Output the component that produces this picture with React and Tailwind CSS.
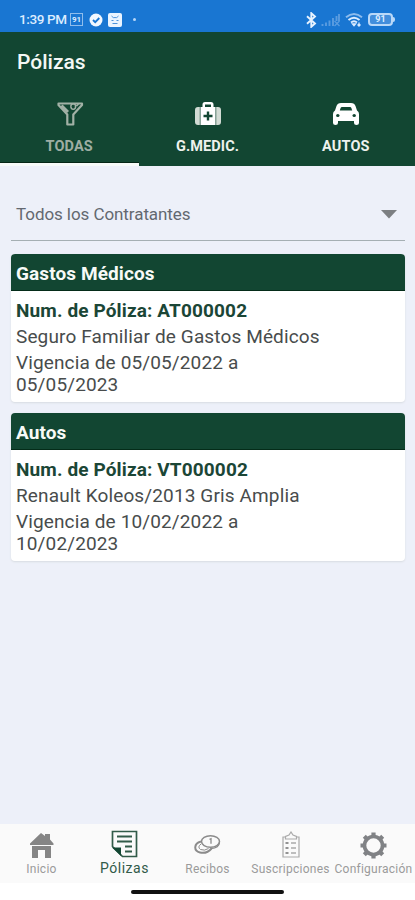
import React from "react";

function StatusBar() {
  return (
    <div className="flex h-8 items-start justify-between bg-[#1976d2] pl-[19px] pr-[20px] pt-[11px] text-[#dcecff]">
      <div className="flex h-[17px] items-center">
        <span className="w-[48px] whitespace-nowrap text-[13.5px] font-medium leading-[17px] tracking-[-0.4px]">1:39 PM</span>
        <span className="ml-[3px] flex h-[13px] w-[13px] items-center justify-center border border-[#8fbdec] text-[8px] font-bold leading-none">91</span>
        <svg className="ml-[6px]" width="14" height="14" viewBox="0 0 14 14">
          <circle cx="7" cy="7" r="6.5" fill="#f2f8ff" />
          <path d="M4 7l2.2 2.2L10.3 5" fill="none" stroke="#1976d2" strokeWidth="1.8" />
        </svg>
        <svg className="ml-[5px]" width="14" height="14" viewBox="0 0 14 14">
          <rect width="14" height="14" rx="2" fill="#eaf4ff" />
          <path d="M3.5 3l1.8 1.6h3.4L10.500 3M3.500 7.500h2M8.500 7.500h2M4.500 10.500h5" fill="none" stroke="#4b92da" strokeWidth="1" />
        </svg>
        <span className="ml-[11px] h-[3px] w-[3px] rounded-full bg-[#b7d7f8]" />
      </div>
      <div className="flex h-[17px] items-center">
        <svg width="11" height="16" viewBox="0 0 11 16" fill="none" stroke="#e8f3ff" strokeWidth="1.900">
          <path d="M1 4.300l8 7.200-3.700 3.300V1.200L9 4.500l-8 7.200" />
        </svg>
        <svg className="ml-[4px]" width="20" height="14" viewBox="0 0 20 14" stroke="#5a9ce0" strokeWidth="1.900">
          <path d="M1.500 13v-2M5 13V9.500M8.500 13V7.500M12 13V5M18 8V1M15.500 8V3" />
          <path d="M13.500 8l5 5M18.500 8l-5 5" strokeWidth="1.300" />
        </svg>
        <svg className="ml-[4px]" width="19" height="15" viewBox="0 0 19 15" fill="none" stroke="#dcecff" strokeWidth="1.900">
          <path d="M1 5.300Q9-1.500 17 5.300" stroke="#8dbced" />
          <path d="M3.500 8Q9 3.300 14.500 8M6 10.500q3-2.500 6 0" />
          <path d="M7.500 12h3L9 13.700zM14 10.500v3M12.500 12.500l1.500 1.500 1.500-1.500" strokeWidth="1.300" />
        </svg>
        <span className="ml-[4px] flex h-[13px] w-[25px] items-center justify-center rounded-[4px] border-2 border-[#b9d8f8] bg-[#438edc] text-[9px] font-bold leading-none">91</span>
        <span className="h-[5px] w-[2px] rounded-r bg-[#b9d8f8]" />
      </div>
    </div>
  );
}

function FilterIcon() {
  return (
    <svg className="translate-x-px" width="28" height="26" viewBox="0 0 28 26" fill="none" stroke="#a2b1a6" strokeWidth="2.200">
      <path d="M2.500 2.500h23.500v1.500l-8.700 9.500v10h-6v-10L2.500 4z" strokeLinejoin="round" />
      <path d="M5.500 4.500l6.500 6.500" strokeWidth="2.800" />
      <path d="M15 5.500a2.300 2.300 0 1 0 4.500 0a2.300 2.300 0 1 0-4.500 0M20.500 5l2-2" strokeWidth="1.600" />
    </svg>
  );
}

function MedicalIcon() {
  return (
    <svg className="translate-x-px" width="28" height="26" viewBox="0 0 28 26">
      <path d="M4 6h1.800v18H4a3 3 0 0 1-3-3V9a3 3 0 0 1 3-3zM24 6h-1.800v18H24a3 3 0 0 0 3-3V9a3 3 0 0 0-3-3z" fill="#d2dbd4" />
      <path d="M8.500 6V3.500a2.500 2.500 0 0 1 2.500-2.500h6a2.500 2.500 0 0 1 2.500 2.500V6H21.500v18H6.500V6zM11 6h6V3.500h-6z" fill="#fff" fillRule="evenodd" />
      <path d="M12.800 10.500h2.400v3.300h3.300v2.400h-3.300v3.300h-2.400v-3.300H9.500v-2.400h3.300z" fill="#124632" />
    </svg>
  );
}

function CarIcon() {
  return (
    <svg width="28" height="26" viewBox="0 0 28 26">
      <path fill="#fff" d="M9 2h10q3.500 0 4.500 3l1.500 4.500Q27 10.500 27 13v9q0 2-2.500 2T22 22v-2H6v2q0 2-2.500 2T1 22v-9q0-2.500 2-3.500L4.500 5q1-3 4.500-3z" />
      <path fill="#124632" d="M10 6h8q1 0 1.400 1.100l.8 2.500H7.800l.8-2.500Q9 6 10 6z" />
      <ellipse cx="5.800" cy="14.500" rx="1.700" ry="1.500" fill="#124632" />
      <ellipse cx="22.200" cy="14.500" rx="1.700" ry="1.500" fill="#124632" />
    </svg>
  );
}

function Tab({ icon, label, active }) {
  return (
    <div className="relative flex h-[74px] flex-1 flex-col items-center pt-[9px]">
      {icon}
      <span className={`mt-[11px] whitespace-nowrap text-[14.5px] font-bold leading-[17px] tracking-[0.1px] ${active ? "text-[#9eada3]" : "text-[#eef2ed]"}`}>{label}</span>
      {active && <span className="absolute -right-px bottom-0 left-0 h-[4px] border-t border-[#042616] bg-[#f7faf8]" />}
    </div>
  );
}

function PolicyCard({ title, number, detail, start, end, className }) {
  return (
    <section className={`overflow-hidden rounded-[4px] bg-white shadow-[0_1px_2px_#d8dce1] ${className}`}>
      <h2 className="h-[37px] border-b border-[#042c19] bg-[#124632] pl-[5px] text-[19px] font-bold leading-[39px] tracking-[0.1px] text-[#f7faf7]">{title}</h2>
      <div className="pl-[5px] pt-[7px] text-[19px] text-[#484c4c]">
        <p className="h-[26px] whitespace-nowrap font-bold leading-[25px] tracking-[0.13px] text-[#1b4636]">Num. de Póliza: {number}</p>
        <p className="h-[26px] whitespace-nowrap leading-[25px] tracking-[0.13px]">{detail}</p>
        <p className="pt-[2px] leading-[22px] tracking-[0.13px]">Vigencia de {start} a<br />{end}</p>
      </div>
    </section>
  );
}

function HomeIcon() {
  return (
    <svg className="translate-y-[2px]" width="25" height="27" viewBox="0 0 25 27" fill="#858585">
      <path d="M12 1l4 3V2h5v5.500l3.500 4V13H1v-1.500z" />
      <path d="M3 14h19v12h-6v-8h-7v8H3z" />
    </svg>
  );
}

function PolicyIcon() {
  return (
    <svg className="translate-y-px" width="27" height="28" viewBox="0 0 27 28" fill="none" stroke="#315b49" strokeWidth="1.700">
      <path d="M1.500 1.500h24v25h-14l-10-10z" />
      <path d="M1 17.500h9V26z" fill="#124632" stroke="none" />
      <path d="M6 6.500h15M6 11.500h15M14 16.500h7M14 21.500h7" strokeWidth="2.200" />
    </svg>
  );
}

function ReceiptIcon() {
  return (
    <svg className="translate-y-[2px]" width="27" height="24" viewBox="0 0 27 24" fill="none" stroke="#8b8b8b">
      <ellipse cx="16.500" cy="8.500" rx="9" ry="5.800" strokeWidth="1.500" />
      <path d="M25.500 9.500Q25 15 17 15.500M15.500 6.300l1.500-.6v5" strokeWidth="1.300" />
      <path d="M7 8.500C-.5 10.500-.5 18 6 19.500q7 1.500 11.500-4" strokeWidth="2" />
      <path d="M7 11q-4 3-.5 5.500 4 1.700 8-1" strokeWidth="1" />
    </svg>
  );
}

function ClipboardIcon() {
  return (
    <svg className="translate-y-[1px]" width="20" height="27" viewBox="0 0 20 27" fill="none" stroke="#aaa" strokeWidth="1.200">
      <path d="M5 6H2v20h16V6h-3M4.500 8V5.500L8 4l2-3 2 3 3.500 1.500V8z" />
      <path d="M4.500 12h3M4.500 17h3M4.500 22h3" stroke="#929292" strokeWidth="2" />
      <path d="M10 12h5M10 17h5M10 22h5" strokeWidth="1.400" />
    </svg>
  );
}

function GearIcon() {
  return (
    <svg className="translate-y-[2px]" width="27" height="27" viewBox="0 0 27 27" fill="none" stroke="#808285">
      <circle cx="13.500" cy="13.500" r="9" strokeWidth="3.600" />
      <path d="M13.500 .5v4M13.500 22.500v4M.5 13.500h4M22.500 13.500h4M4.300 4.300l2.900 2.900M19.800 19.800l2.900 2.900M4.300 22.700l2.900-2.900M19.800 7.200l2.900-2.900" strokeWidth="4.200" />
    </svg>
  );
}

function NavItem({ icon, label, active }) {
  return (
    <div className="flex w-[83px] shrink-0 flex-col items-center">
      <div className="flex h-[34px] items-center">{icon}</div>
      <span className={`whitespace-nowrap leading-[16px] ${active ? "text-[14px] tracking-[0.5px] text-[#315b49]" : "pt-px text-[12px] tracking-[0.25px] text-[#9b9b9b]"}`}>{label}</span>
    </div>
  );
}

export default function App() {
  return (
    <div className="flex h-[900px] w-[415px] flex-col overflow-hidden bg-[#edf0f9] font-['Roboto',sans-serif]">
      <StatusBar />
      <header className="h-[134px] bg-[#124632]">
        <h1 className="h-[60px] pl-[17px] text-[21px] font-medium leading-[60px] text-[#f4f8f5]">Pólizas</h1>
        <div className="flex">
          <Tab icon={<FilterIcon />} label="TODAS" active />
          <Tab icon={<MedicalIcon />} label="G.MEDIC." />
          <Tab icon={<CarIcon />} label="AUTOS" />
        </div>
      </header>
      <main className="flex-1 pl-[11px] pr-[10px] pt-[22px]">
        <div className="flex h-[53px] items-center justify-between border-b border-[#a5afb3] pl-[5px] pr-[8px]">
          <span className="text-[17px] leading-5 tracking-[-0.07px] text-[#636870]">Todos los Contratantes</span>
          <svg width="16" height="9" viewBox="0 0 16 9"><path d="M0 0h16L8 8.500z" fill="#7c7f82" /></svg>
        </div>
        <PolicyCard className="mt-[13px] h-[148px]" title="Gastos Médicos" number="AT000002" detail="Seguro Familiar de Gastos Médicos" start="05/05/2022" end="05/05/2023" />
        <PolicyCard className="mt-[11px] h-[148px]" title="Autos" number="VT000002" detail="Renault Koleos/2013 Gris Amplia" start="10/02/2022" end="10/02/2023" />
      </main>
      <nav className="flex h-[59px] bg-[#fafafa] pt-[2px]">
        <NavItem icon={<HomeIcon />} label="Inicio" />
        <NavItem icon={<PolicyIcon />} label="Pólizas" active />
        <NavItem icon={<ReceiptIcon />} label="Recibos" />
        <NavItem icon={<ClipboardIcon />} label="Suscripciones" />
        <NavItem icon={<GearIcon />} label="Configuración" />
      </nav>
      <div className="flex h-[17px] justify-center bg-white pt-[7px]">
        <span className="h-[4px] w-[153px] rounded-full bg-[#111]" />
      </div>
    </div>
  );
}
